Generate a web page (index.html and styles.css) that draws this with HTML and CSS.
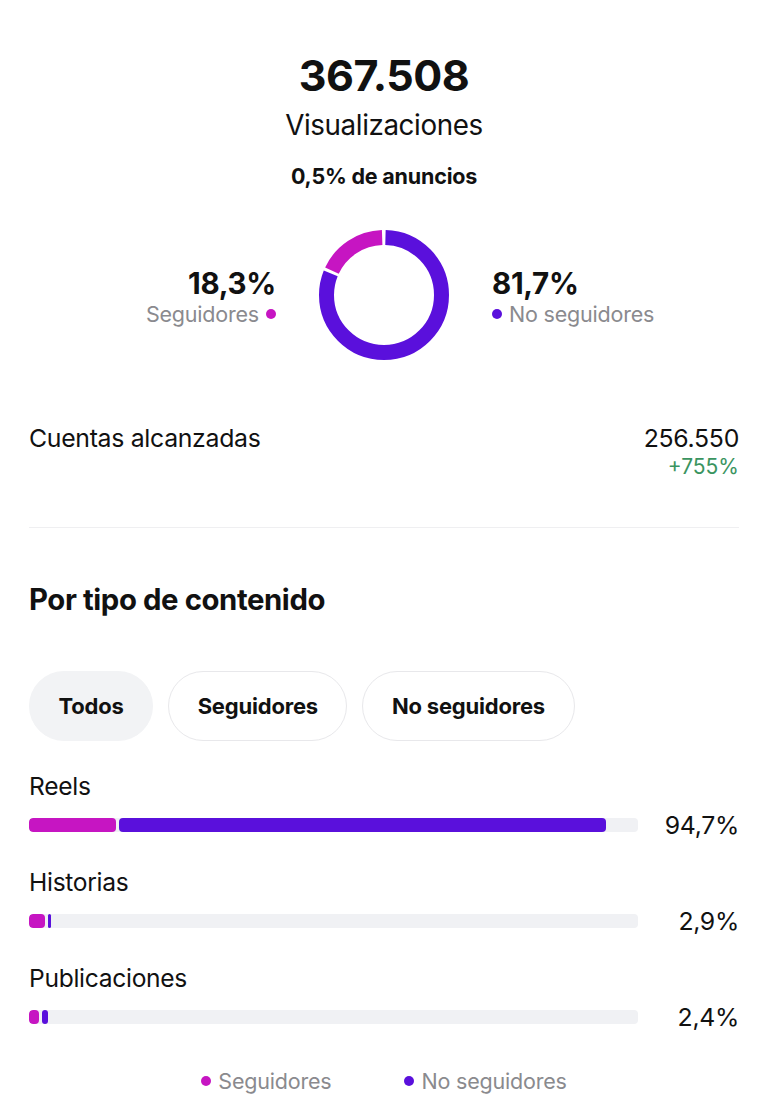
FILE: index.html
```html
<!DOCTYPE html>
<html lang="es">
<head>
<meta charset="utf-8">
<link rel="stylesheet" href="styles.css">
</head>
<body>
<main class="page">
  <section class="summary">
    <div class="total">367.508</div>
    <div class="total-label">Visualizaciones</div>
    <div class="ads">0,5% de anuncios</div>
  </section>

  <section class="split">
    <div class="side side-left">
      <div class="pct">18,3%</div>
      <div class="legend-item">Seguidores <span class="dot dot-f"></span></div>
    </div>
    <svg class="donut" viewBox="0 0 130 130" width="130" height="130">
      <g transform="rotate(-90 65 65)">
        <circle cx="65" cy="65" r="57.5" fill="none" stroke="#5a10dc" stroke-width="15" stroke-dasharray="291.2 400" stroke-dashoffset="-1.5"/>
        <circle cx="65" cy="65" r="57.5" fill="none" stroke="#c615c2" stroke-width="15" stroke-dasharray="63.1 400" stroke-dashoffset="-295.7"/>
      </g>
    </svg>
    <div class="side side-right">
      <div class="pct">81,7%</div>
      <div class="legend-item"><span class="dot dot-n"></span> No seguidores</div>
    </div>
  </section>

  <section class="reach">
    <div class="reach-label">Cuentas alcanzadas</div>
    <div class="reach-values">
      <div class="reach-num">256.550</div>
      <div class="reach-delta">+755%</div>
    </div>
  </section>

  <hr class="divider">

  <h2 class="section-title">Por tipo de contenido</h2>

  <div class="pills">
    <button class="pill pill-active">Todos</button>
    <button class="pill">Seguidores</button>
    <button class="pill">No seguidores</button>
  </div>

  <section class="types">
    <div class="type">
      <div class="type-name">Reels</div>
      <div class="type-row">
        <div class="track">
          <span class="seg seg-f" style="width:87px"></span>
          <span class="seg seg-n" style="width:487px"></span>
        </div>
        <div class="type-pct">94,7%</div>
      </div>
    </div>
    <div class="type">
      <div class="type-name">Historias</div>
      <div class="type-row">
        <div class="track">
          <span class="seg seg-f" style="width:16px"></span>
          <span class="seg seg-n" style="width:3px"></span>
        </div>
        <div class="type-pct">2,9%</div>
      </div>
    </div>
    <div class="type">
      <div class="type-name">Publicaciones</div>
      <div class="type-row">
        <div class="track">
          <span class="seg seg-f" style="width:10px"></span>
          <span class="seg seg-n" style="width:6px"></span>
        </div>
        <div class="type-pct">2,4%</div>
      </div>
    </div>
  </section>

  <div class="legend">
    <span class="legend-item"><span class="dot dot-f"></span> Seguidores</span>
    <span class="legend-item"><span class="dot dot-n"></span> No seguidores</span>
  </div>
</main>
</body>
</html>
```

FILE: styles.css
```css
* { box-sizing: border-box; }
html, body { margin: 0; padding: 0; background: #fff; }
body {
  font-family: Inter, "Liberation Sans", Arial, sans-serif;
  color: #111;
}
.page {
  width: 768px;
  padding: 50px 29px 0 29px;
}
.summary {
  display: flex;
  flex-direction: column;
  align-items: center;
}
.total {
  font-size: 43px;
  font-weight: 700;
  line-height: 50px;
  letter-spacing: -0.5px;
}
.total-label {
  font-size: 27.8px;
  line-height: 34px;
  margin-top: 8px;
  letter-spacing: -0.4px;
}
.ads {
  font-size: 21.5px;
  font-weight: 700;
  line-height: 28px;
  margin-top: 20px;
  letter-spacing: -0.2px;
}
.split {
  display: grid;
  grid-template-columns: 1fr 130px 1fr;
  column-gap: 43px;
  align-items: center;
  margin: 40px -29px 0 -29px;
}
.donut { display: block; }
.side { display: flex; flex-direction: column; padding-top: 4px; }
.side-left { align-items: flex-end; }
.side-right { align-items: flex-start; }
.pct {
  font-size: 29.5px;
  font-weight: 700;
  line-height: 34px;
  letter-spacing: -0.3px;
}
.legend-item {
  font-size: 21.5px;
  line-height: 28px;
  color: #8a8a8e;
  display: inline-flex;
  align-items: center;
  gap: 7px;
  letter-spacing: -0.2px;
}
.dot {
  display: inline-block;
  width: 10px;
  height: 10px;
  border-radius: 50%;
}
.dot-f { background: #c615c2; }
.dot-n { background: #5a10dc; }

.reach {
  display: flex;
  justify-content: space-between;
  align-items: flex-start;
  margin-top: 62px;
}
.reach-label {
  font-size: 24.8px;
  line-height: 32px;
  letter-spacing: -0.3px;
}
.reach-values { text-align: right; }
.reach-num {
  font-size: 24.8px;
  line-height: 32px;
  letter-spacing: -0.3px;
}
.reach-delta {
  font-size: 21px;
  line-height: 26px;
  color: #3a9460;
}
.divider {
  border: 0;
  border-top: 1px solid #efeff1;
  margin: 47px 0 0 0;
}
.section-title {
  font-size: 29.3px;
  font-weight: 700;
  line-height: 36px;
  margin: 54px 0 0 0;
  letter-spacing: -0.4px;
}
.pills {
  display: flex;
  gap: 15px;
  margin-top: 53px;
}
.pill {
  font-family: inherit;
  font-size: 22px;
  font-weight: 700;
  color: #111;
  height: 70px;
  border-radius: 35px;
  border: 1.5px solid #e8e8eb;
  background: #fff;
  padding: 0 28.5px;
  letter-spacing: -0.2px;
}
.pill-active {
  background: #f2f3f5;
  border-color: #f2f3f5;
}
.types { margin-top: 28px; }
.type { margin-bottom: 24px; }
.type:last-child { margin-bottom: 0; }
.type-name {
  font-size: 24.6px;
  line-height: 34px;
  letter-spacing: -0.3px;
}
.type-row {
  display: flex;
  align-items: center;
  margin-top: 6px;
  height: 32px;
}
.track {
  width: 609px;
  height: 14px;
  border-radius: 4px;
  background: #f0f1f4;
  display: flex;
  gap: 3px;
  overflow: hidden;
}
.seg {
  display: block;
  height: 100%;
  border-radius: 4px;
}
.seg-f { background: #c615c2; }
.seg-n { background: #5a10dc; }
.type-pct {
  flex: 1;
  text-align: right;
  font-size: 24.8px;
  line-height: 32px;
  letter-spacing: -0.3px;
}
.legend {
  display: flex;
  justify-content: center;
  gap: 73px;
  margin-top: 34px;
}
```
